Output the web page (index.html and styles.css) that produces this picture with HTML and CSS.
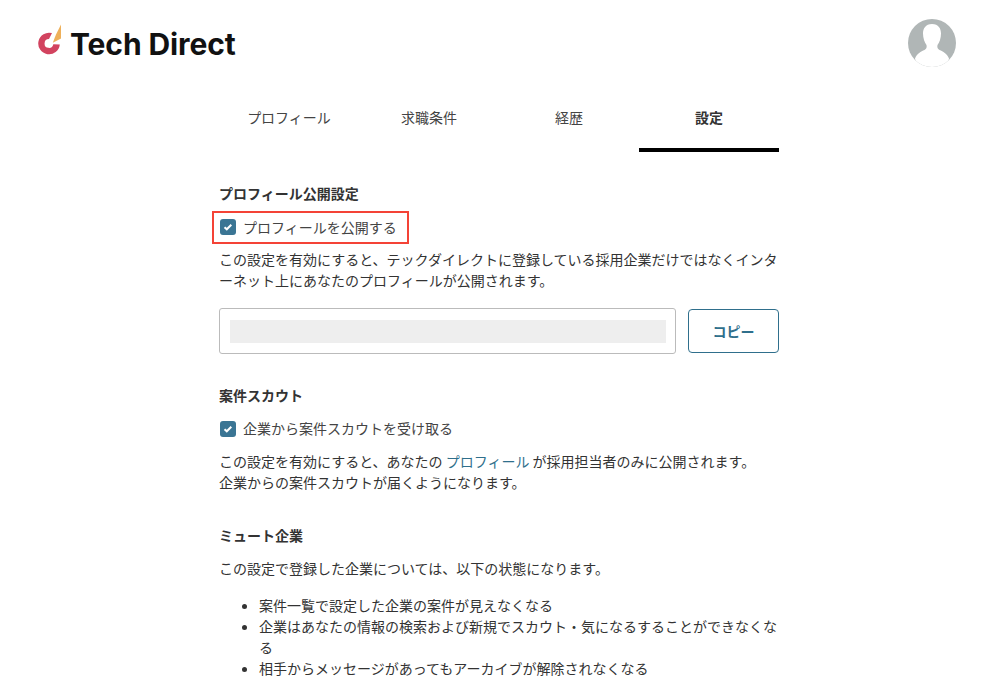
FILE: index.html
```html
<!DOCTYPE html>
<html lang="ja">
<head>
<meta charset="utf-8">
<title>Tech Direct</title>
<link rel="stylesheet" href="styles.css">
</head>
<body>
<header class="header">
  <a class="logo">
    <svg class="logo-mark" width="24" height="31" viewBox="0 0 24 31">
      <path d="M14 9.100A10.800 10.800 0 1 0 21.800 20.500L15.300 20.300A4.400 4.400 0 1 1 11 15.100Z" fill="#d2435f"/>
      <path d="M23 0.500L23 14.500L14.800 18.700L18 10.500Z" fill="#eeb05a"/>
    </svg>
    <span class="logo-text">Tech Direct</span>
  </a>
  <svg class="avatar" width="48" height="48" viewBox="0 0 48 48">
    <defs><clipPath id="av"><circle cx="24" cy="24" r="24"/></clipPath></defs>
    <circle cx="24" cy="24" r="24" fill="#b0b6b6"/>
    <path clip-path="url(#av)" d="M24 5C17.500 5 15 9.500 15 14.500C15 19 16.500 23.500 18.500 26C19 28 18.500 30 16.500 31C13 32.500 9 34.500 7 39.500L9 48H39L41 39.500C39 34.500 35 32.500 31.500 31C29.500 30 29 28 29.500 26C31.500 23.500 33 19 33 14.500C33 9.500 30.500 5 24 5Z" fill="#fff"/>
  </svg>
</header>
<main class="main">
  <nav class="tabs">
    <a class="tab">プロフィール</a>
    <a class="tab">求職条件</a>
    <a class="tab">経歴</a>
    <a class="tab tab-active">設定</a>
  </nav>

  <section class="section section-first">
    <h2 class="heading">プロフィール公開設定</h2>
    <div class="highlight">
      <label class="check">
        <span class="box"><svg width="10" height="8" viewBox="0 0 10 8"><path d="M1.500 4.200L3.800 6.300L8.300 1.800" fill="none" stroke="#fff" stroke-width="2"/></svg></span>
        プロフィールを公開する
      </label>
    </div>
    <p class="text text-after-highlight">この設定を有効にすると、テックダイレクトに登録している採用企業だけではなくインターネット上にあなたのプロフィールが公開されます。</p>
    <div class="url-row">
      <div class="url-field"><div class="url-mask"></div></div>
      <button class="copy">コピー</button>
    </div>
  </section>

  <section class="section section-scout">
    <h2 class="heading">案件スカウト</h2>
    <label class="check check-scout">
      <span class="box"><svg width="10" height="8" viewBox="0 0 10 8"><path d="M1.500 4.200L3.800 6.300L8.300 1.800" fill="none" stroke="#fff" stroke-width="2"/></svg></span>
      企業から案件スカウトを受け取る
    </label>
    <p class="text">この設定を有効にすると、あなたの <a class="link">プロフィール</a> が採用担当者のみに公開されます。<br>企業からの案件スカウトが届くようになります。</p>
  </section>

  <section class="section section-mute">
    <h2 class="heading">ミュート企業</h2>
    <p class="text text-mute">この設定で登録した企業については、以下の状態になります。</p>
    <ul class="list">
      <li>案件一覧で設定した企業の案件が見えなくなる</li>
      <li>企業はあなたの情報の検索および新規でスカウト・気になるすることができなくなる</li>
      <li>相手からメッセージがあってもアーカイブが解除されなくなる</li>
    </ul>
  </section>
</main>
</body>
</html>
```
FILE: styles.css
```css
* { box-sizing: border-box; }
html, body { margin: 0; padding: 0; height: 677px; overflow: hidden; background: #fff; }
body {
  font-family: "Noto Sans CJK JP", "Noto Sans", sans-serif;
  font-size: 14px;
  line-height: 21px;
  color: #333;
}
.header {
  display: flex;
  justify-content: space-between;
  align-items: flex-start;
  height: 84px;
  padding: 19px 42px 0 38px;
}
.logo { display: flex; align-items: flex-start; gap: 8px; padding-top: 5px; }
.logo-mark { display: block; }
.logo-text {
  font-family: "Inter", sans-serif;
  font-weight: 700;
  font-size: 30px;
  line-height: 36px;
  letter-spacing: -0.1px;
  color: #111;
  padding-top: 2px;
}
.avatar { display: block; }
.main { width: 560px; margin: 0 auto; }
.tabs { display: flex; height: 68px; }
.tab {
  flex: 1;
  text-align: center;
  padding-top: 23px;
  color: #444;
}
.tab-active { font-weight: 700; color: #333; border-bottom: 4px solid #000; }
.heading { margin: 0; font-size: 14px; line-height: 21px; font-weight: 700; color: #333; }
.section-first { padding-top: 31px; }
.highlight {
  width: 197px;
  height: 33px;
  margin: 7px 0 0 -7px;
  padding-left: 7px;
  border: 2px solid #f44336;
  display: flex;
  align-items: center;
}
.highlight .check { margin-left: -2px; margin-top: -1px; }
.check { display: flex; align-items: center; gap: 7px; color: #444; }
.box {
  width: 16px;
  height: 16px;
  border-radius: 3px;
  background: #3a7594;
  margin-left: 1px;
  display: flex;
  align-items: center;
  justify-content: center;
  flex: none;
}
.box svg { display: block; }
.text { margin: 0; color: #333; }
.text-after-highlight { margin-top: 5px; }
.url-row { display: flex; align-items: center; gap: 12px; margin-top: 17px; }
.url-field {
  flex: 1;
  height: 46px;
  border: 1px solid #bbb;
  border-radius: 3px;
  padding: 11px 9px 0 10px;
}
.url-mask { height: 23px; background: #eee; }
.copy {
  width: 91px;
  height: 44px;
  background: #fff;
  border: 1px solid #2f6f8c;
  border-radius: 4px;
  color: #2f6f8c;
  font: 700 14px/21px "Noto Sans CJK JP", sans-serif;
  padding: 0;
}
.section-scout { padding-top: 31px; }
.check-scout { margin-top: 12px; }
.section-scout .text { margin-top: 12px; }
.link { color: #2f6f8c; }
.section-mute { padding-top: 32px; }
.text-mute { margin-top: 12px; }
.list { margin: 16px 0 0; padding: 0 0 0 40px; }
.list li { margin: 0; }
```
